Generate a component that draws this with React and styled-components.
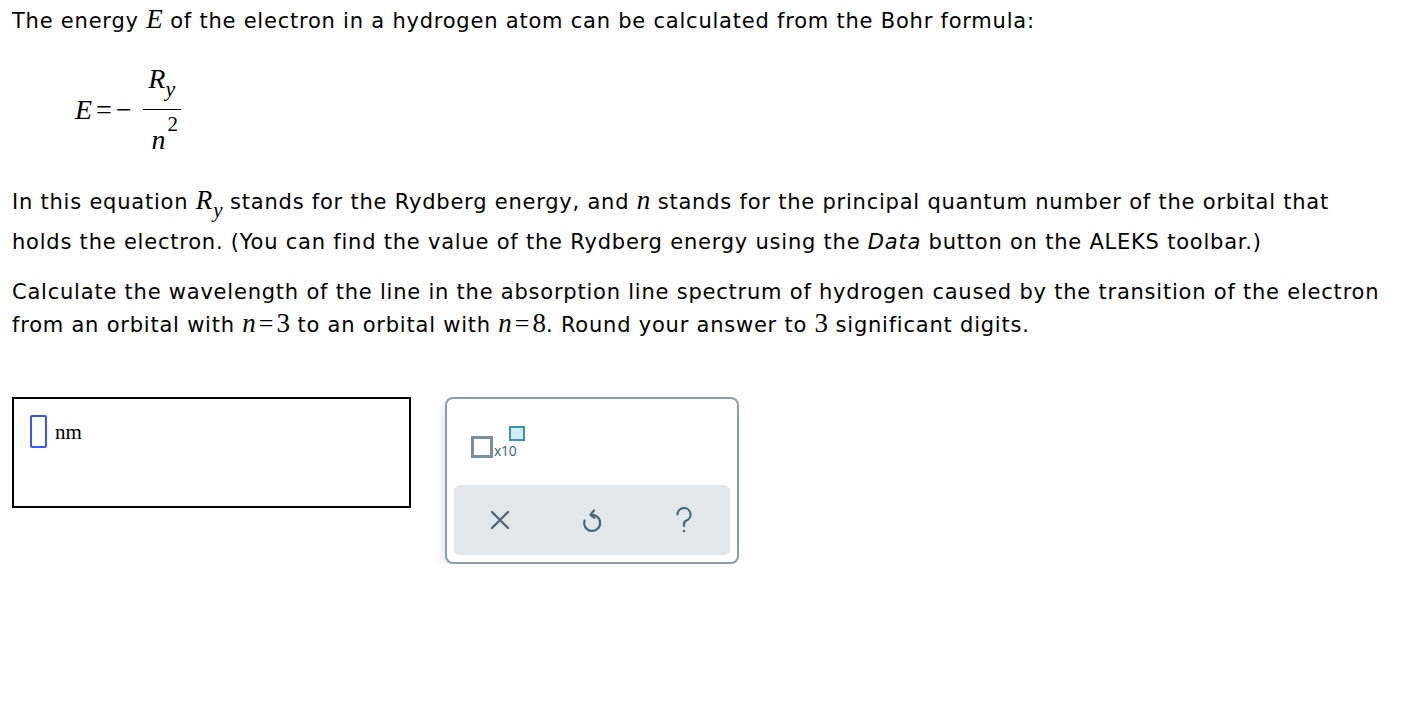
import React from 'react';
import styled, { createGlobalStyle } from 'styled-components';

const Global = createGlobalStyle`
  html, body { margin: 0; padding: 0; background: #fff; }
  body { font-family: "DejaVu Sans", Verdana, sans-serif; color: #000; }
`;

const Page = styled.div`
  padding: 5px 12px 0 12px;
  width: 1424px;
  box-sizing: border-box;
`;

const P = styled.p`
  margin: 0 0 ${(p) => p.$mb || 0}px;
  max-width: 1376px;
  font-size: 21px;
  letter-spacing: 0.78px;
  line-height: ${(p) => p.$lh || 33}px;
`;

const V = styled.span`
  font-family: "Liberation Serif", "Times New Roman", serif;
  font-style: italic;
  letter-spacing: 0;
  line-height: 20px;
  font-size: ${(p) => p.$size || 27}px;
`;

const Num = styled.span`
  font-family: "Liberation Serif", "Times New Roman", serif;
  letter-spacing: 0;
  line-height: 20px;
  font-size: ${(p) => p.$size || 27}px;
`;

const Eq = styled.span`
  font-family: "Liberation Serif", "Times New Roman", serif;
  letter-spacing: 0;
  line-height: 20px;
  font-size: 26px;
  margin: 0 3px;
`;

const Sub = styled.span`
  font-family: "Liberation Serif", "Times New Roman", serif;
  font-style: italic;
  letter-spacing: 0;
  font-size: ${(p) => p.$size || 21}px;
  position: relative;
  top: ${(p) => p.$top || 8}px;
  line-height: 0;
  margin-left: ${(p) => p.$ml || 0}px;
`;

const Sup = styled.span`
  font-family: "Liberation Serif", "Times New Roman", serif;
  font-size: 21px;
  position: relative;
  top: -18px;
  line-height: 0;
  margin-left: 2px;
`;

const Formula = styled.div`
  display: flex;
  align-items: center;
  margin: 26px 0 27px 63px;
`;

const Op = styled.span`
  font-family: "Liberation Serif", "Times New Roman", serif;
  font-size: 28px;
  line-height: 30px;
  margin: 0 ${(p) => p.$m || 0}px;
`;

const Frac = styled.span`
  display: inline-flex;
  flex-direction: column;
  align-items: center;
  margin-left: 11px;
`;

const Numer = styled.span`
  line-height: 30px;
  height: 30px;
  padding: 0 0 15px 0;
`;

const Denom = styled.span`
  line-height: 30px;
  height: 30px;
  padding: 15px 0 0 6px;
`;

const FracBar = styled.span`
  display: block;
  width: 38px;
  height: 1px;
  background: #000;
`;

const BigV = styled.span`
  font-family: "Liberation Serif", "Times New Roman", serif;
  font-style: italic;
  font-size: 28px;
  line-height: 30px;
`;

const AnswerRow = styled.div`
  display: flex;
  align-items: flex-start;
  gap: 34px;
  margin-top: 55px;
`;

const AnswerBox = styled.div`
  width: 399px;
  height: 111px;
  box-sizing: border-box;
  border: 2px solid #000;
  display: flex;
  align-items: flex-start;
  padding: 16px 0 0 16px;
  gap: 8px;
`;

const Caret = styled.span`
  width: 17px;
  height: 33px;
  box-sizing: border-box;
  border: 2px solid #3a55f5;
  border-radius: 2px;
`;

const Unit = styled.span`
  font-family: "Liberation Serif", "Times New Roman", serif;
  font-size: 21px;
  line-height: 34px;
`;

const Keypad = styled.div`
  width: 294px;
  height: 167px;
  box-sizing: border-box;
  border: 2px solid #8b9da6;
  border-radius: 8px;
  box-shadow: -4px 6px 10px rgba(0, 0, 0, 0.08);
  display: flex;
  flex-direction: column;
  justify-content: space-between;
  padding: 0 7px 7px 7px;
  background: #fff;
`;

const TemplateBtn = styled.div`
  display: flex;
  align-items: flex-end;
  margin: 24px 0 0 17px;
  height: 35px;
`;

const BigSquare = styled.span`
  width: 22px;
  height: 22px;
  box-sizing: border-box;
  border: 3px solid #7b8f99;
`;

const X10 = styled.span`
  font-family: "Open Sans", "DejaVu Sans", sans-serif;
  font-size: 14px;
  color: #455e6b;
  line-height: 14px;
  margin-left: 1px;
  letter-spacing: -0.3px;
`;

const SmallSquare = styled.span`
  width: 16px;
  height: 15px;
  box-sizing: border-box;
  border: 2.5px solid #3a97b3;
  background: #d3ecf2;
  align-self: flex-start;
  margin: 3px 0 0 -7px;
`;

const Bar = styled.div`
  height: 70px;
  background: #e1e7ea;
  border-radius: 6px;
  display: grid;
  grid-template-columns: repeat(3, 1fr);
  align-items: center;
  justify-items: center;
`;

const IconBtn = styled.span`
  display: flex;
  align-items: center;
  justify-content: center;
  width: 40px;
  height: 40px;
  color: #4a6878;
`;

const CloseIcon = () => (
  <svg width="22" height="22" viewBox="0 0 22 22" fill="none" stroke="currentColor" strokeWidth="2.4" strokeLinecap="round">
    <path d="M3 3 L19 19 M19 3 L3 19" />
  </svg>
);

const UndoIcon = () => (
  <svg width="24" height="26" viewBox="0 0 24 26" fill="none" stroke="currentColor" strokeWidth="2.2" strokeLinecap="round" strokeLinejoin="round">
    <path d="M11 8 A8 8 0 1 1 4.5 13.5" />
    <path d="M14 3.5 L10.5 7.8 L14.5 11" />
  </svg>
);

const HelpIcon = () => (
  <svg width="22" height="28" viewBox="0 0 22 28" fill="none" stroke="currentColor" strokeWidth="2.2" strokeLinecap="round">
    <path d="M4.5 8.5 A6.5 6.5 0 1 1 13.5 14.5 C11.8 15.3 11 16.3 11 18 V20" />
    <circle cx="11" cy="25" r="1.3" fill="currentColor" stroke="none" />
  </svg>
);

export default function App() {
  return (
    <>
      <Global />
      <Page>
        <P>
          The energy <V>E</V> of the electron in a hydrogen atom can be calculated from the Bohr formula:
        </P>
        <Formula>
          <BigV>E</BigV>
          <Op $m={4}>=</Op>
          <Op>−</Op>
          <Frac>
            <Numer>
              <BigV>R</BigV>
              <Sub $size={22} $top={8} $ml={0}>y</Sub>
            </Numer>
            <FracBar />
            <Denom>
              <BigV>n</BigV>
              <Sup>2</Sup>
            </Denom>
          </Frac>
        </Formula>
        <P $mb={14} $lh={40}>
          In this equation <V>R</V>
          <Sub $ml={1}>y</Sub> stands for the Rydberg energy, and <V>n</V> stands for the principal quantum number of the orbital that
          holds the electron. (You can find the value of the Rydberg energy using the <i>Data</i> button on the ALEKS toolbar.)
        </P>
        <P>
          Calculate the wavelength of the line in the absorption line spectrum of hydrogen caused by the transition of the electron
          from an orbital with <V>n</V>
          <Eq>=</Eq>
          <Num>3</Num> to an orbital with <V>n</V>
          <Eq>=</Eq>
          <Num>8</Num>. Round your answer to <Num>3</Num> significant digits.
        </P>
        <AnswerRow>
          <AnswerBox>
            <Caret />
            <Unit>nm</Unit>
          </AnswerBox>
          <Keypad>
            <TemplateBtn>
              <BigSquare />
              <X10>x10</X10>
              <SmallSquare />
            </TemplateBtn>
            <Bar>
              <IconBtn><CloseIcon /></IconBtn>
              <IconBtn><UndoIcon /></IconBtn>
              <IconBtn><HelpIcon /></IconBtn>
            </Bar>
          </Keypad>
        </AnswerRow>
      </Page>
    </>
  );
}
